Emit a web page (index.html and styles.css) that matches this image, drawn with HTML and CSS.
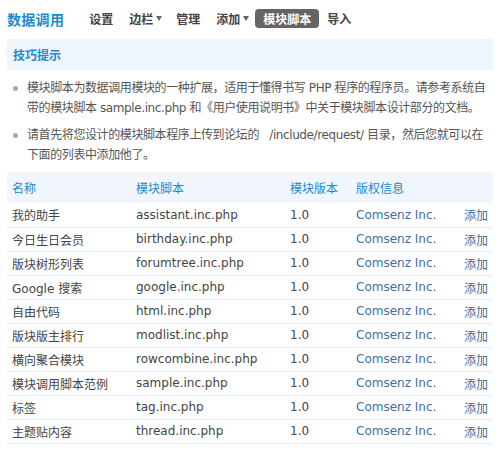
FILE: index.html
```html
<!DOCTYPE html>
<html lang="zh">
<head>
    <meta charset="UTF-8">
    <title>数据调用</title>
    <link rel="stylesheet" href="styles.css">
</head>
<body>
    <div class="container">
        <div class="topbar">
            <h1>数据调用</h1>
            <ul class="nav">
                <li><a href="#">设置</a></li>
                <li><a href="#" class="drop">边栏<span class="arrow"></span></a></li>
                <li><a href="#">管理</a></li>
                <li><a href="#" class="drop">添加<span class="arrow"></span></a></li>
                <li><a href="#" class="current">模块脚本</a></li>
                <li><a href="#">导入</a></li>
            </ul>
        </div>

        <!-- 技巧提示 -->
        <div class="tips">
            <h3>技巧提示</h3>
        </div>
        <ul class="tiplist">
            <li>模块脚本为数据调用模块的一种扩展，适用于懂得书写 PHP 程序的程序员。请参考系统自带的模块脚本 sample.inc.php 和《用户使用说明书》中关于模块脚本设计部分的文档。</li>
            <li>请首先将您设计的模块脚本程序上传到论坛的&nbsp;&nbsp; /include/request/ 目录，然后您就可以在下面的列表中添加他了。</li>
        </ul>

        <!-- 模块列表 -->
        <table class="list">
            <thead>
                <tr>
                    <th class="c-name">名称</th>
                    <th class="c-file">模块脚本</th>
                    <th class="c-ver">模块版本</th>
                    <th class="c-copy">版权信息</th>
                    <th class="c-op"></th>
                </tr>
            </thead>
            <tbody>
                <tr><td>我的助手</td><td>assistant.inc.php</td><td>1.0</td><td><a href="#">Comsenz Inc.</a></td><td class="c-op"><a href="#">添加</a></td></tr>
                <tr><td>今日生日会员</td><td>birthday.inc.php</td><td>1.0</td><td><a href="#">Comsenz Inc.</a></td><td class="c-op"><a href="#">添加</a></td></tr>
                <tr><td>版块树形列表</td><td>forumtree.inc.php</td><td>1.0</td><td><a href="#">Comsenz Inc.</a></td><td class="c-op"><a href="#">添加</a></td></tr>
                <tr><td>Google 搜索</td><td>google.inc.php</td><td>1.0</td><td><a href="#">Comsenz Inc.</a></td><td class="c-op"><a href="#">添加</a></td></tr>
                <tr><td>自由代码</td><td>html.inc.php</td><td>1.0</td><td><a href="#">Comsenz Inc.</a></td><td class="c-op"><a href="#">添加</a></td></tr>
                <tr><td>版块版主排行</td><td>modlist.inc.php</td><td>1.0</td><td><a href="#">Comsenz Inc.</a></td><td class="c-op"><a href="#">添加</a></td></tr>
                <tr><td>横向聚合模块</td><td>rowcombine.inc.php</td><td>1.0</td><td><a href="#">Comsenz Inc.</a></td><td class="c-op"><a href="#">添加</a></td></tr>
                <tr><td>模块调用脚本范例</td><td>sample.inc.php</td><td>1.0</td><td><a href="#">Comsenz Inc.</a></td><td class="c-op"><a href="#">添加</a></td></tr>
                <tr><td>标签</td><td>tag.inc.php</td><td>1.0</td><td><a href="#">Comsenz Inc.</a></td><td class="c-op"><a href="#">添加</a></td></tr>
                <tr><td>主题贴内容</td><td>thread.inc.php</td><td>1.0</td><td><a href="#">Comsenz Inc.</a></td><td class="c-op"><a href="#">添加</a></td></tr>
            </tbody>
        </table>
    </div>
</body>
</html>
```

FILE: styles.css
```css
/* Stile generale */
body {
    margin: 0;
    background-color: #ffffff;
    font-family: "DejaVu Sans", "Noto Sans CJK SC", sans-serif;
    font-size: 12px;
    color: #555555;
}

a {
    text-decoration: none;
}

.container {
    padding: 0 7px;
}

/* Barra superiore */
.topbar {
    display: flex;
    align-items: center;
    height: 37px;
}

.topbar h1 {
    margin: 0 17px 0 0;
    font-size: 14px;
    font-weight: bold;
    color: #1b8ad0;
    letter-spacing: 0.3px;
}

.nav {
    display: flex;
    align-items: center;
    list-style: none;
    margin: 0;
    padding: 0;
}

.nav a {
    display: flex;
    align-items: center;
    height: 19px;
    padding: 0 8px;
    font-weight: bold;
    color: #444444;
}

.nav a.drop {
    padding-right: 6px;
}

.nav a.current {
    background-color: #656565;
    color: #ffffff;
    border-radius: 4px;
}

.arrow {
    display: inline-block;
    margin-left: 3px;
    border-left: 3px solid transparent;
    border-right: 3px solid transparent;
    border-top: 5px solid #666666;
}

/* Box dei suggerimenti */
.tips {
    background-color: #eef5fb;
    height: 31px;
    display: flex;
    align-items: center;
    padding-left: 6px;
    margin-top: 2px;
}

.tips h3 {
    margin: 0;
    font-size: 12px;
    font-weight: bold;
    color: #1b8ad0;
}

.tiplist {
    list-style: none;
    margin: 8px 0 0;
    padding: 0 6px 0 20px;
    letter-spacing: -0.4px;
}

.tiplist li {
    position: relative;
    line-height: 20px;
    margin-bottom: 7px;
}

.tiplist li::before {
    content: "";
    position: absolute;
    left: -14px;
    top: 8px;
    width: 5px;
    height: 5px;
    border-radius: 50%;
    background-color: #aaaaaa;
}

/* Tabella */
.list {
    width: 100%;
    table-layout: fixed;
    border-collapse: collapse;
    margin-top: 1px;
}

.list th,
.list td {
    box-sizing: border-box;
    padding: 0 5px;
    white-space: nowrap;
    text-align: left;
}

.list th {
    background-color: #f0f6fb;
    height: 31px;
    font-weight: normal;
    color: #1b8ad0;
}

.list td {
    height: 24px;
    border-bottom: 1px dotted #dde3ea;
    color: #444444;
}

.list td a {
    color: #3a6fa8;
}

.c-name { width: 124px; }
.c-file { width: 154px; }
.c-ver  { width: 66px; }
.c-copy { width: 108px; }
.c-op   { width: 34px; }
```
